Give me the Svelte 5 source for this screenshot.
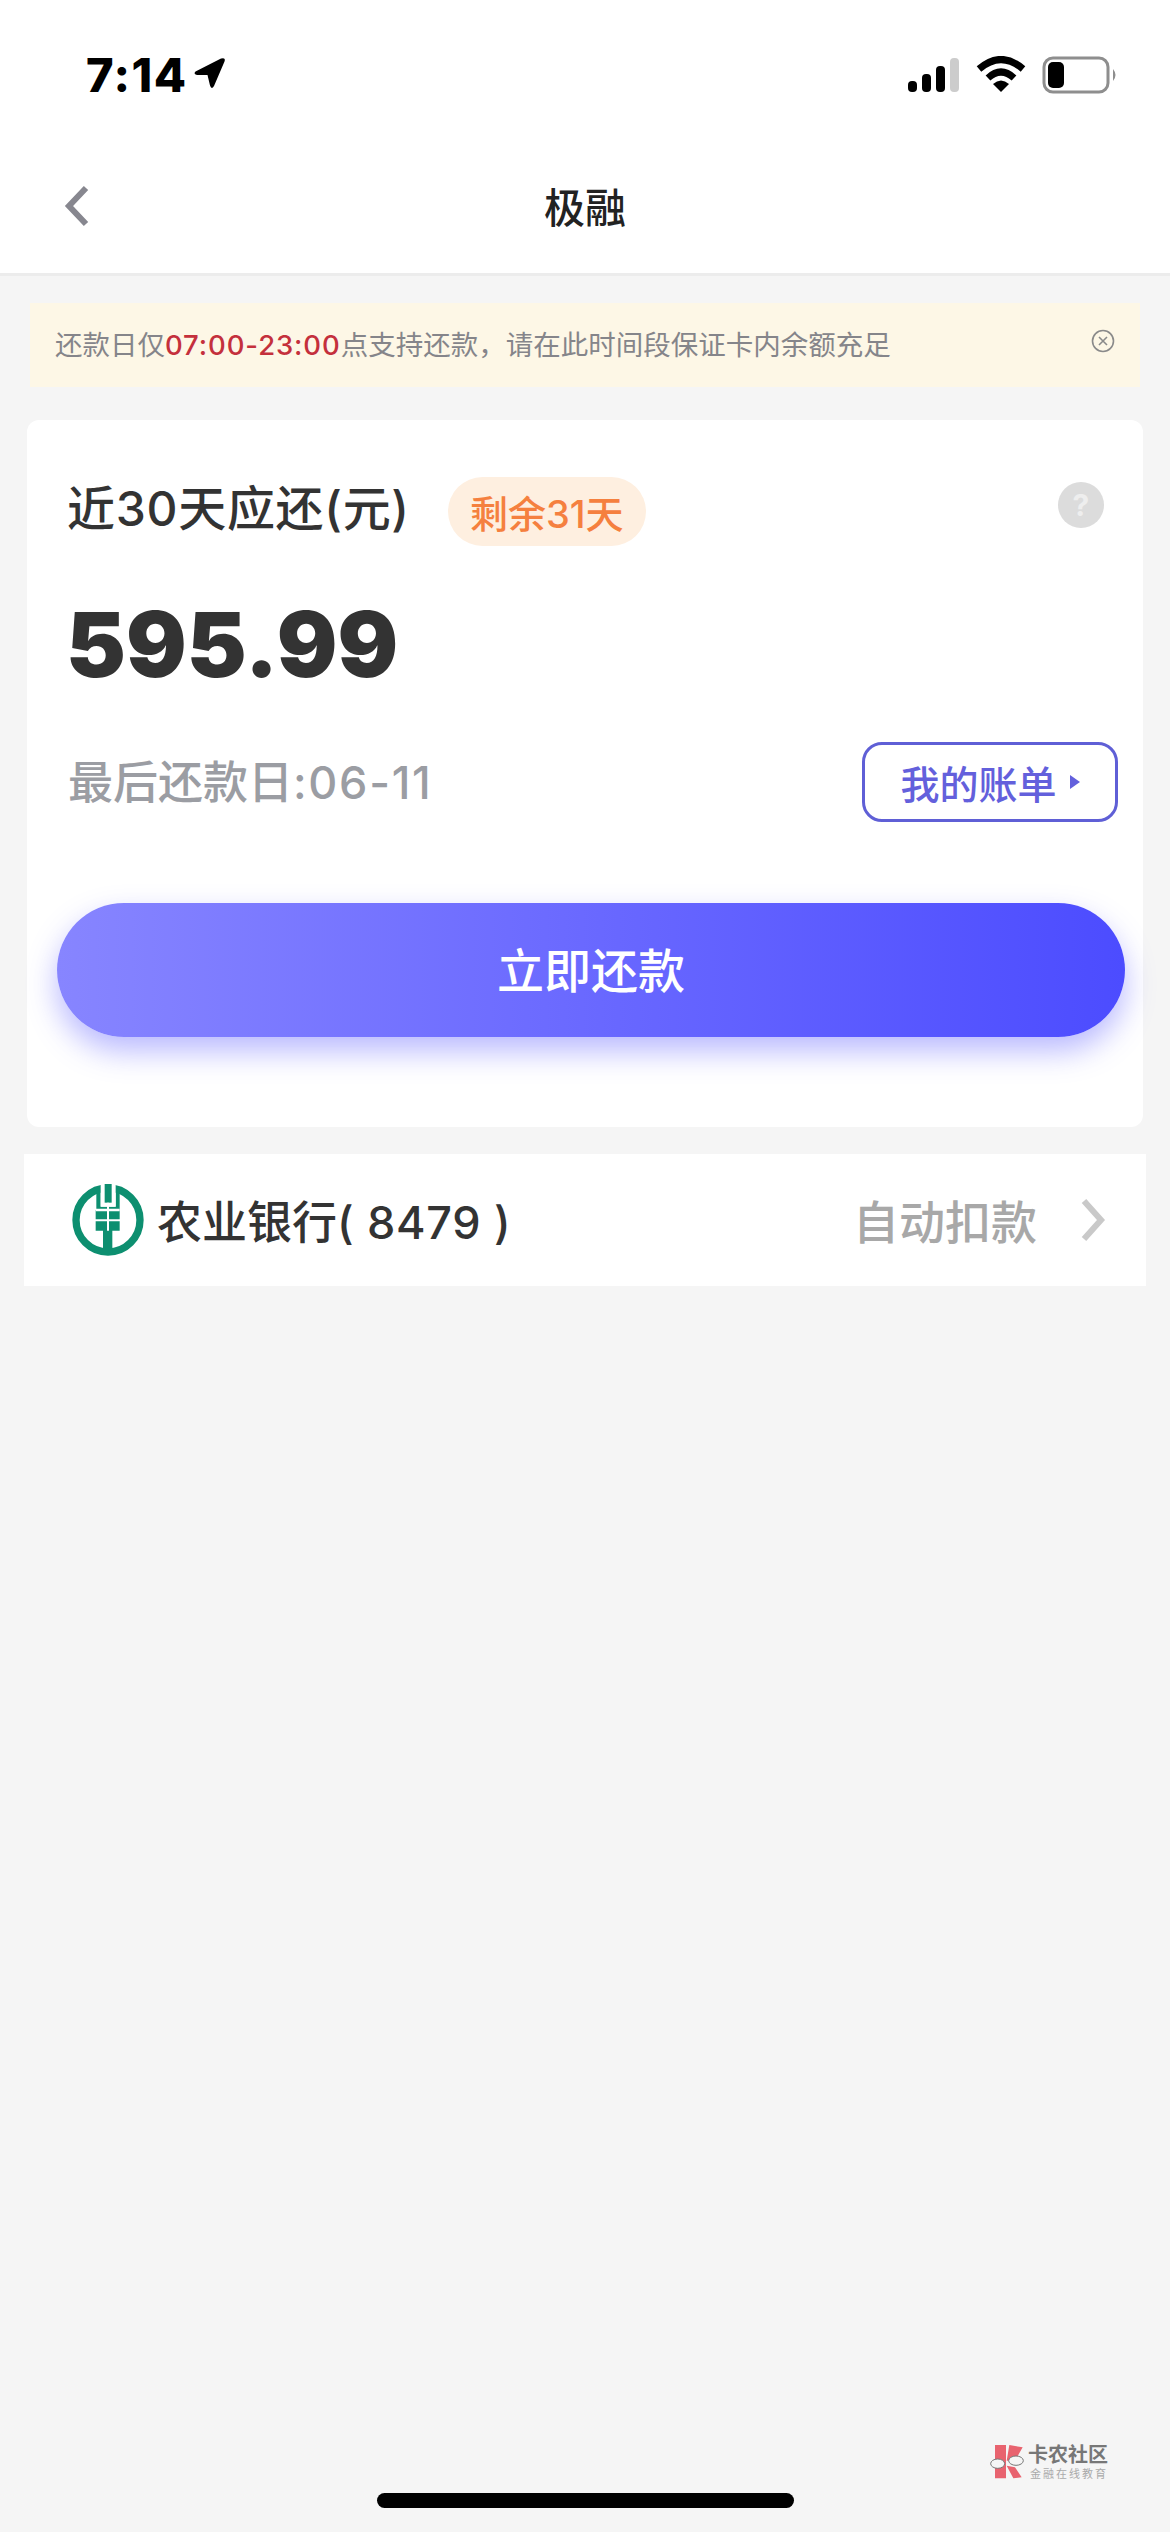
<script>
  const title = '极融';
</script>

<div class="page">
  <header class="top">
    <div class="status">
      <div class="time">
        <span>7:14</span>
        <svg class="loc" width="32" height="32" viewBox="0 0 32 32"><path d="M1.5 14.5 L27 1.5 Q32 0 30.5 4.5 L20 29 Q17.5 33 16 28.5 L13.5 18 L3 18 Q-1 17 1.5 14.5Z" fill="#000"/></svg>
      </div>
      <div class="sys">
        <svg width="52" height="36" viewBox="0 0 52 36">
          <rect x="0" y="24" width="9" height="11" rx="4" fill="#000"/>
          <rect x="14" y="17" width="9" height="18" rx="4" fill="#000"/>
          <rect x="28" y="9" width="9" height="26" rx="4" fill="#000"/>
          <rect x="42" y="1" width="9" height="34" rx="4" fill="#ccc"/>
        </svg>
        <svg width="50" height="38" viewBox="0 0 50 38">
          <path d="M3 13 Q25 -6 47 13" fill="none" stroke="#000" stroke-width="7"/>
          <path d="M12 22 Q25 10 38 22" fill="none" stroke="#000" stroke-width="7"/>
          <path d="M17 28 Q25 21 33 28 L25 36Z" fill="#000"/>
        </svg>
        <svg class="bat" width="76" height="38" viewBox="0 0 76 38">
          <rect x="2" y="2" width="64" height="34" rx="9" fill="none" stroke="#8e8e8e" stroke-width="3"/>
          <rect x="6" y="6" width="16" height="26" rx="5" fill="#000"/>
          <path d="M71 13 Q76 19 71 25Z" fill="#8e8e8e"/>
        </svg>
      </div>
    </div>
    <nav class="nav">
      <svg class="back" width="26" height="42" viewBox="0 0 26 42"><path d="M22 3 L5 21 L22 39" fill="none" stroke="#87878f" stroke-width="6"/></svg>
      <h1>{title}</h1>
    </nav>
  </header>

  <div class="notice">
    <p>还款日仅<b>07:00-23:00</b>点支持还款，请在此时间段保证卡内余额充足</p>
    <svg class="close" width="24" height="24" viewBox="0 0 24 24">
      <circle cx="12" cy="12" r="10.5" fill="none" stroke="#8a8a8a" stroke-width="1.6"/>
      <path d="M8 8 L16 16 M16 8 L8 16" stroke="#8a8a8a" stroke-width="1.6"/>
    </svg>
  </div>

  <section class="card">
    <div class="row head">
      <span class="label">近30天应还(元)</span>
      <span class="pill">剩余31天</span>
      <span class="help">?</span>
    </div>
    <div class="amount">595.99</div>
    <div class="row due">
      <span class="date">最后还款日<span class="nums">:06-11</span></span>
      <button class="bill">我的账单<i></i></button>
    </div>
    <button class="pay">立即还款</button>
  </section>

  <section class="bank">
    <svg class="abc" width="72" height="72" viewBox="68 72 214 216">
      <circle cx="175" cy="180" r="96" fill="none" stroke="#0d8f70" stroke-width="22"/>
      <path d="M140 85 V150 H138 V212 H210 V150 H210 V85 H198 V140 H153 V85Z" fill="#0d8f70"/>
      <rect x="153" y="68" width="45" height="72" fill="#fff"/>
      <rect x="165" y="68" width="21" height="60" fill="#0d8f70"/>
      <rect x="160" y="210" width="28" height="72" fill="#0d8f70"/>
      <path d="M175 128 V212 M136 181 H212" stroke="#fff" stroke-width="6" fill="none"/>
      <path d="M138 150 H172 M178 150 H210" stroke="#fff" stroke-width="8" fill="none"/>
    </svg>
    <span class="name">农业银行<em>( 8479 )</em></span>
    <span class="auto">自动扣款</span>
    <svg class="more" width="26" height="44" viewBox="0 0 26 44"><path d="M4 3 L21 22 L4 41" fill="none" stroke="#c9c9c9" stroke-width="6"/></svg>
  </section>

  <div class="mark">
    <svg width="35" height="35" viewBox="120 135 105 105">
      <path d="M135 138 H168 V238 H135Z M178 138 L218 145 L195 185 H170Z M170 200 L195 205 L215 235 L190 238Z" fill="#e8636f"/>
      <ellipse cx="143" cy="194" rx="21" ry="14" fill="#f5f5f5" stroke="#777" stroke-width="3"/>
      <ellipse cx="198" cy="185" rx="22" ry="14" fill="#f5f5f5" stroke="#777" stroke-width="3"/>
    </svg>
    <div class="mark-text">
      <strong>卡农社区</strong>
      <small>金融在线教育</small>
    </div>
  </div>

  <div class="home"></div>
</div>

<style>
  :global(body) {
    margin: 0;
    background: #f5f5f5;
  }
  .page {
    position: relative;
    height: 2532px;
    overflow: hidden;
    background: #f5f5f5;
    font-family: "Inter", "Noto Sans CJK SC", sans-serif;
    color: #333;
  }
  .top {
    background: #fff;
    border-bottom: 3px solid #ececec;
    height: 273px;
  }
  .status {
    height: 146px;
    display: flex;
    justify-content: space-between;
    align-items: flex-start;
    padding: 52px 52px 0 86px;
    box-sizing: border-box;
  }
  .time {
    display: flex;
    align-items: center;
    gap: 6px;
    font-size: 47px;
    font-weight: 800;
    line-height: 46px;
    letter-spacing: 1.5px;
    color: #000;
    font-family: "Inter", sans-serif;
  }
  .loc { margin-top: -4px; }
  .sys {
    display: flex;
    align-items: center;
    gap: 16px;
    margin-top: 4px;
  }
  .nav {
    position: relative;
    height: 127px;
    display: flex;
    align-items: center;
    justify-content: center;
  }
  .back {
    position: absolute;
    left: 64px;
    top: 39px;
  }
  h1 {
    margin: 0 0 9px;
    font-size: 41px;
    font-weight: 500;
    color: #222;
    font-family: "Noto Sans CJK SC", sans-serif;
    line-height: 1;
  }
  .notice {
    margin: 27px 30px 0;
    height: 84px;
    background: #fdf7e6;
    display: flex;
    align-items: center;
    justify-content: space-between;
    padding: 0 25px 0 25px;
    box-sizing: border-box;
  }
  .notice p {
    margin: 0 0 5px;
    font-size: 27.5px;
    color: #85858a;
    font-family: "Noto Sans CJK SC", sans-serif;
    white-space: nowrap;
  }
  .notice b {
    color: #c4303c;
    font-weight: 500;
    font-family: "Inter", sans-serif;
    letter-spacing: 0.9px;
  }
  .close { margin-top: -8px; }
  .card {
    margin: 33px 27px 0;
    height: 707px;
    box-sizing: border-box;
    padding: 57px 25px 0 41px;
    background: #fff;
    border-radius: 12px;
    position: relative;
  }
  .row {
    display: flex;
    align-items: center;
  }
  .head { height: 69px; }
  .label {
    font-size: 48px;
    font-weight: 500;
    color: #333;
    letter-spacing: 0.7px;
    white-space: nowrap;
    margin: 0 0 14px -1px;
  }
  .pill {
    margin-left: 38px;
    height: 69px;
    width: 198px;
    border-radius: 35px;
    background: #feefe0;
    color: #f5803f;
    font-size: 38px;
    font-weight: 500;
    display: flex;
    align-items: center;
    justify-content: center;
  }
  .help {
    margin: 0 14px 14px auto;
    width: 46px;
    height: 46px;
    border-radius: 50%;
    background: #dcdcdc;
    color: #eeeeee;
    font-weight: 700;
    font-size: 30px;
    display: flex;
    align-items: center;
    justify-content: center;
  }
  .amount {
    margin: 49px 0 0 -2px;
    font-size: 90px;
    line-height: 100px;
    font-weight: 900;
    color: #333;
  }
  .due {
    margin-top: 47px;
    justify-content: space-between;
  }
  .date {
    font-size: 45px;
    font-weight: 500;
    color: #9b9da3;
    white-space: nowrap;
    margin-bottom: 5px;
  }
  .nums {
    letter-spacing: 1.7px;
  }
  .bill {
    width: 256px;
    height: 80px;
    border: 3px solid #5f5fd6;
    border-radius: 20px;
    background: #fff;
    color: #6360dc;
    font-size: 39px;
    font-weight: 500;
    font-family: "Noto Sans CJK SC", sans-serif;
    display: flex;
    align-items: center;
    justify-content: center;
    gap: 13px;
    padding: 0;
    box-sizing: border-box;
  }
  .bill i {
    width: 0;
    height: 0;
    border-left: 10px solid #6360dc;
    border-top: 7px solid transparent;
    border-bottom: 7px solid transparent;
  }
  .pay {
    display: block;
    margin: 81px 0 0 -11px;
    width: 1068px;
    height: 134px;
    border: 0;
    border-radius: 67px;
    background: linear-gradient(90deg, #8785ff 0%, #4c4cff 100%);
    box-shadow: 0 14px 30px rgba(80, 80, 255, 0.4);
    color: #fff;
    font-size: 47px;
    font-weight: 500;
    font-family: "Noto Sans CJK SC", sans-serif;
    padding: 0 0 6px;
  }
  .bank {
    margin: 27px 24px 0;
    height: 132px;
    background: #fff;
    display: flex;
    align-items: center;
    padding: 0 40px 0 48px;
    box-sizing: border-box;
  }
  .abc { margin-right: 13px; flex: none; }
  .name {
    font-size: 45px;
    font-weight: 500;
    color: #333;
    white-space: nowrap;
    margin-bottom: 2px;
  }
  .name em {
    font-style: normal;
    font-family: "Inter", sans-serif;
    font-weight: 500;
    letter-spacing: 0.7px;
  }
  .auto {
    margin-left: auto;
    font-size: 46px;
    font-weight: 500;
    color: #a8a8a8;
    margin-right: 43px;
    margin-bottom: 2px;
  }
  .mark {
    position: absolute;
    left: 990px;
    top: 2444px;
    display: flex;
    align-items: center;
    gap: 3px;
  }
  .mark-text {
    display: flex;
    flex-direction: column;
    font-family: "Noto Sans CJK SC", sans-serif;
    line-height: 1;
  }
  .mark strong {
    font-size: 20px;
    font-weight: 700;
    color: #777;
  }
  .mark small {
    font-size: 11px;
    color: #aaa;
    letter-spacing: 2px;
    margin-top: 4px;
    margin-left: 2px;
  }
  .home {
    position: absolute;
    left: 377px;
    top: 2493px;
    width: 417px;
    height: 15px;
    border-radius: 8px;
    background: #000;
  }
</style>
